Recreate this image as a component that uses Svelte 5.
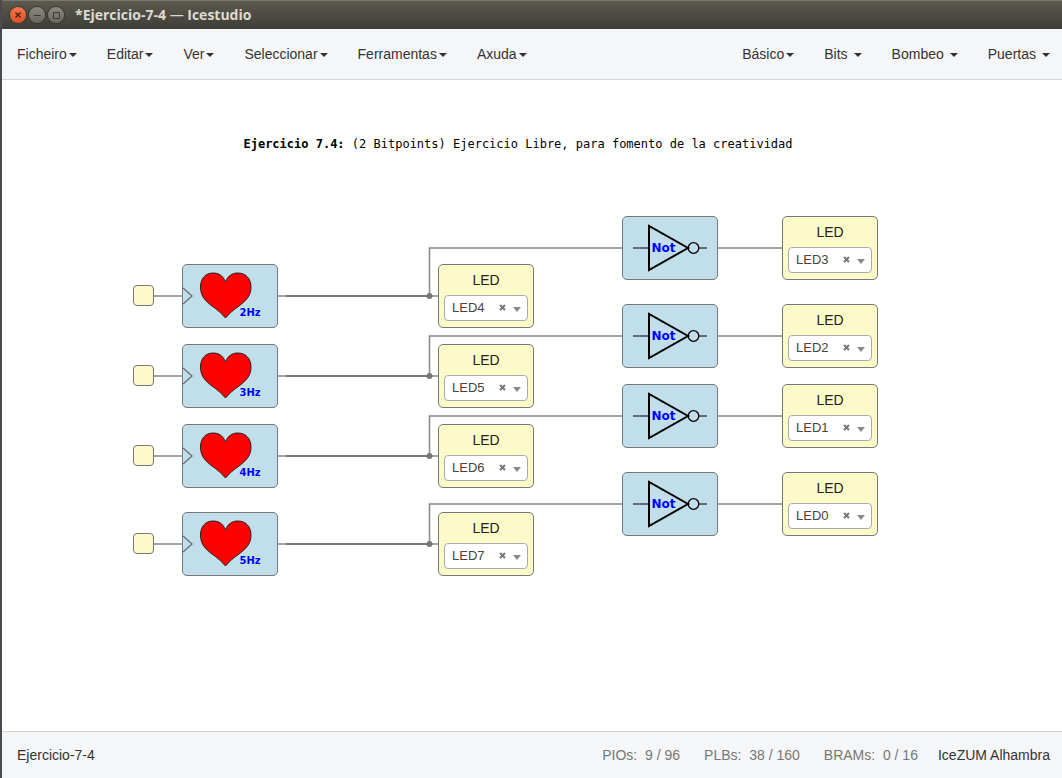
<script>
  const menus = ['Ficheiro', 'Editar', 'Ver', 'Seleccionar', 'Ferramentas', 'Axuda'];
  const collections = ['Básico', 'Bits', 'Bombeo', 'Puertas'];
  const resources = [
    { name: 'PIOs', used: 9, total: 96 },
    { name: 'PLBs', used: 38, total: 160 },
    { name: 'BRAMs', used: 0, total: 16 }
  ];
  const rows = [
    { y: 184, rate: '2Hz', led: 'LED4', gateY: 136, inverted: 'LED3' },
    { y: 264, rate: '3Hz', led: 'LED5', gateY: 224, inverted: 'LED2' },
    { y: 344, rate: '4Hz', led: 'LED6', gateY: 304, inverted: 'LED1' },
    { y: 432, rate: '5Hz', led: 'LED7', gateY: 392, inverted: 'LED0' }
  ];
  const pins = ['LED0', 'LED1', 'LED2', 'LED3', 'LED4', 'LED5', 'LED6', 'LED7'];
</script>

{#snippet output(x, y, pin)}
  <div class="node led" style:left="{x}px" style:top="{y}px">
    <label for={pin}>LED</label>
    <div class="picker">
      <select id={pin} value={pin}>
        {#each pins as p}<option value={p}>{p}</option>{/each}
      </select>
      <button class="clear" aria-label="Clear {pin}">
        <svg width="7" height="7" viewBox="0 0 7 7"><path d="M1 1 L6 6 M6 1 L1 6" /></svg>
      </button>
      <svg class="arrow" width="8" height="5" viewBox="0 0 8 5"><path d="M0 0H8L4 5Z" /></svg>
    </div>
  </div>
{/snippet}

<div class="window">
  <header class="titlebar">
    <button class="win close" aria-label="Close">
      <svg viewBox="0 0 16 16"><path d="M5.5 5.5L10.5 10.5M10.5 5.5L5.5 10.5" /></svg>
    </button>
    <button class="win" aria-label="Minimize">
      <svg viewBox="0 0 16 16"><path d="M4.5 8.5H11.5" /></svg>
    </button>
    <button class="win" aria-label="Maximize">
      <svg viewBox="0 0 16 16"><path d="M5.5 5.5H11.5V11.5H5.5Z" /></svg>
    </button>
    <h1>*Ejercicio-7-4 <span>—</span> Icestudio</h1>
  </header>

  <nav>
    <div class="group">
      {#each menus as name}<button>{name}<i class="caret"></i></button>{/each}
    </div>
    <div class="group">
      {#each collections as name, i}<button class:spaced={i > 0}>{name}<i class="caret"></i></button>{/each}
    </div>
  </nav>

  <main>
    <p class="note"><b>Ejercicio 7.4:</b> (2 Bitpoints) Ejercicio Libre, para fomento de la creatividad</p>

    <svg class="wires" aria-hidden="true">
      {#each rows as r}
        <path d="M151 {r.y + 32}H436M427.5 {r.y + 32}V{r.gateY + 32}H780" />
        <path class="bus" d="M284 {r.y + 32}H428" />
        <circle cx="427.5" cy={r.y + 32} r="3" />
      {/each}
    </svg>

    {#each rows as r}
      <div class="port" style:top="{r.y + 21}px"></div>

      <div class="node block heart" style:top="{r.y}px">
        <svg width="94" height="62" viewBox="1 1 94 62">
          <path class="clock" d="M1 24L10 32L1 40" />
          <path
            class="shape"
            d="M43.5 18C46 11 51 9 56 9C64 9 69 15 69 23C69 31 65 36 57 42C51 46 47 50 43.5 54C40 50 36 46 30 42C22 36 18.5 31 18.5 23C18.5 15 23 9 31 9C36 9 41 11 43.5 18Z"
          />
          <text x="57.5" y="52" font-size="10">{r.rate}</text>
        </svg>
      </div>

      {@render output(436, r.y, r.led)}

      <div class="node block gate" style:top="{r.gateY}px">
        <svg width="94" height="62" viewBox="1 1 94 62">
          <path class="lead" d="M11 32H27M77 32H85" />
          <path class="tri" d="M27 10V54L66 32Z" />
          <circle cx="71.5" cy="32" r="5.3" />
          <text x="29.5" y="36" font-size="12">Not</text>
        </svg>
      </div>

      {@render output(780, r.gateY, r.inverted)}
    {/each}
  </main>

  <footer>
    <span class="project">Ejercicio-7-4</span>
    <div class="stats">
      {#each resources as s}<span>{s.name}:&nbsp; {s.used} / {s.total}</span>{/each}
    </div>
    <span class="board">IceZUM Alhambra</span>
  </footer>
</div>

<style>
  :global(body) {
    background: #fff;
  }
  * {
    box-sizing: border-box;
  }
  button,
  select {
    font: inherit;
    color: inherit;
    background: none;
    border: 0;
    margin: 0;
    padding: 0;
  }
  .window {
    display: flex;
    flex-direction: column;
    min-height: 100vh;
    border-left: 2px solid #4a4b4e;
    font: 14px/20px 'Liberation Sans', Arial, sans-serif;
    color: #333;
  }
  .titlebar {
    display: flex;
    align-items: center;
    gap: 3px;
    height: 29px;
    padding: 0 8px;
    border-top: 1px solid #777976;
    background: linear-gradient(#5c594e, #3e3d38);
  }
  .win {
    width: 16px;
    height: 16px;
    border-radius: 50%;
    background: linear-gradient(#8b8980, #68665f);
    box-shadow: 0 0 0 1px #37362f;
  }
  .win.close {
    background: linear-gradient(#f4784f, #df4f22);
  }
  .win svg {
    display: block;
    fill: none;
    stroke: #3b3a34;
    stroke-width: 1;
  }
  .win.close svg {
    stroke: #4c1e0e;
    stroke-width: 1.3;
  }
  h1 {
    margin: 0 0 0 8px;
    font: bold 14px/20px 'Open Sans', 'Noto Sans', sans-serif;
    color: #dfdbd2;
  }
  h1 span {
    font-weight: normal;
  }
  nav {
    display: flex;
    justify-content: space-between;
    height: 51px;
    background: #f5f6f8;
    border-bottom: 1px solid #d3d6d9;
  }
  .group {
    display: flex;
  }
  .group:last-child {
    margin-right: -3px;
  }
  nav button {
    display: flex;
    align-items: center;
    gap: 2px;
    padding: 0 15px;
  }
  nav .spaced {
    gap: 6px;
  }
  .caret {
    border: 4px solid transparent;
    border-top-color: #333;
    border-bottom: 0;
    margin-top: 2px;
  }
  main {
    position: relative;
    flex: 1;
    min-height: 520px;
    background: #fff;
  }
  .note {
    position: absolute;
    left: 231px;
    top: 54px;
    width: 570px;
    margin: 0;
    text-align: center;
    white-space: nowrap;
    font: 12px/20px 'DejaVu Sans Mono', monospace;
    color: #000;
  }
  .wires {
    position: absolute;
    width: 100%;
    height: 100%;
    fill: none;
    stroke: #888;
    stroke-width: 1.5;
  }
  .wires .bus {
    stroke: #777;
    stroke-width: 2;
  }
  .wires circle {
    fill: #777;
    stroke: none;
  }
  .port,
  .node {
    position: absolute;
    border: 1px solid #777;
    border-radius: 5px;
  }
  .port {
    left: 131px;
    width: 21px;
    height: 21px;
    border-radius: 4px;
    background: #fbfac8;
  }
  .node {
    width: 96px;
    height: 64px;
  }
  .block {
    background: #c0dfeb;
  }
  .block svg {
    display: block;
    fill: none;
    stroke: #000;
  }
  .heart {
    left: 180px;
  }
  .gate {
    left: 620px;
  }
  .clock {
    stroke: #666;
    stroke-width: 1.2;
  }
  .shape {
    fill: red;
    stroke: #222;
  }
  .lead {
    stroke-width: 1.2;
  }
  .tri {
    stroke-width: 2;
  }
  .gate circle {
    stroke-width: 1.3;
  }
  .block text {
    font-family: 'DejaVu Sans', sans-serif;
    font-weight: bold;
    fill: #00f;
    stroke: none;
  }
  .led {
    display: flex;
    flex-direction: column;
    gap: 5px;
    padding: 5px;
    background: #fbfac8;
  }
  .led label {
    text-align: center;
    color: #222;
  }
  .picker {
    position: relative;
    height: 26px;
  }
  .picker select {
    display: block;
    width: 100%;
    height: 100%;
    padding: 0 7px;
    appearance: none;
    border: 1px solid #aaa;
    border-radius: 4px;
    background: #fff;
    font-size: 13px;
    color: #444;
  }
  .clear {
    position: absolute;
    right: 22px;
    top: 9px;
    width: 7px;
    height: 7px;
  }
  .clear svg {
    display: block;
    stroke: #777;
    stroke-width: 2;
  }
  .arrow {
    position: absolute;
    right: 7px;
    top: 12px;
    fill: #888;
  }
  footer {
    display: flex;
    align-items: center;
    height: 47px;
    padding: 0 12px 0 15px;
    background: #f5f6f8;
    border-top: 1px solid #d3d6d9;
  }
  .stats {
    display: flex;
    gap: 24px;
    margin: 0 20px 0 auto;
    color: #777;
  }
</style>
